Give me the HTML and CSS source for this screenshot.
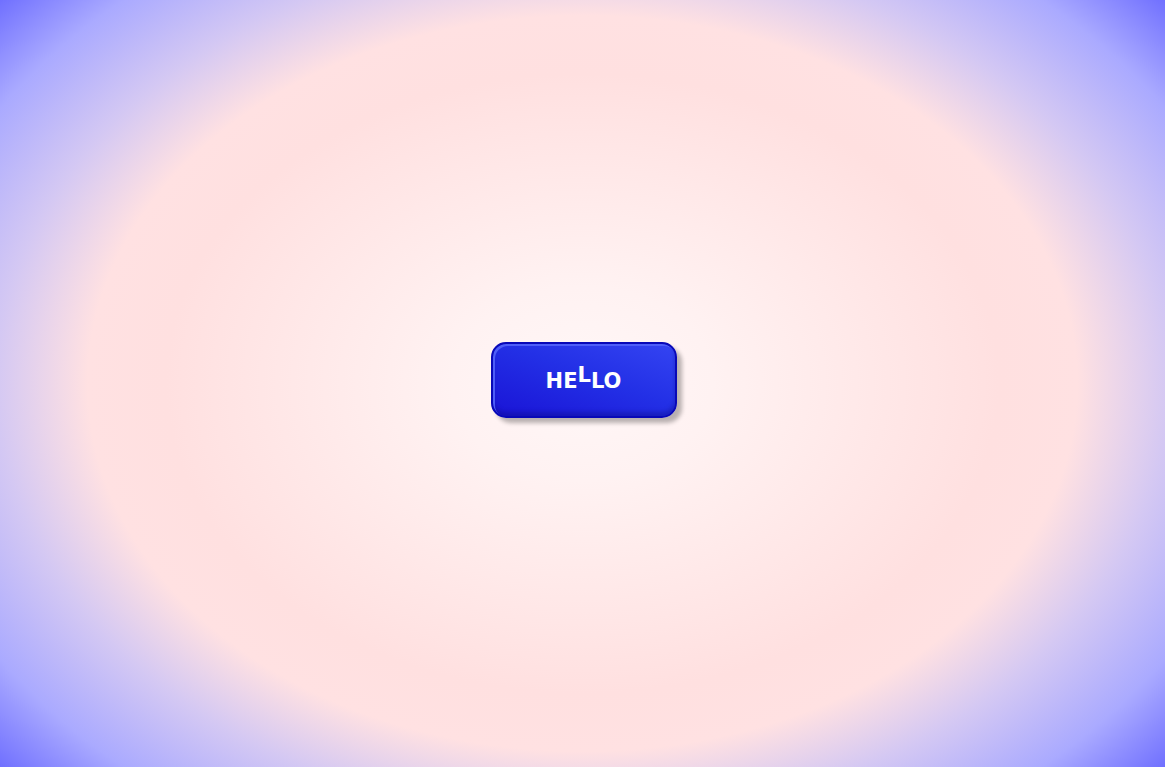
FILE: index.html
```html
<!DOCTYPE html>
<html>
<head>
<meta charset="utf-8">
<link rel="stylesheet" href="styles.css">
</head>
<body>
<main class="stage">
  <button class="hello-btn" type="button">HE<span class="raised">L</span>LO</button>
</main>
</body>
</html>
```

FILE: styles.css
```css
html, body {
  margin: 0;
  padding: 0;
  height: 100%;
}
body {
  background: radial-gradient(ellipse 651px 484px at 50% 50%,
    #fff7f7 0%,
    #fff2f2 20%,
    #ffe0e0 64%,
    #ffe1e2 76%,
    #d4c8f3 90%,
    #aaaaff 106%,
    #6e6eff 120%);
  font-family: "DejaVu Sans", Verdana, sans-serif;
}
.stage {
  height: 100%;
  display: flex;
  align-items: center;
  justify-content: center;
}
.hello-btn {
  width: 186px;
  height: 76px;
  margin: 0 0 8px 2px;
  border: 2px solid #0808b8;
  border-radius: 15px;
  background: linear-gradient(200deg, #3444f2 0%, #2330e6 45%, #1a14d6 100%);
  box-shadow:
    inset 2px 2px 0 #4e5ef8,
    inset 0 -4px 4px rgba(10, 10, 120, 0.35),
    5px 5px 4px rgba(0, 0, 0, 0.28);
  color: #ffffff;
  font-family: "DejaVu Sans", Verdana, sans-serif;
  font-weight: bold;
  font-size: 21px;
  padding: 0 0 2px 0;
  line-height: 1;
}
.raised {
  vertical-align: 6px;
}
```
